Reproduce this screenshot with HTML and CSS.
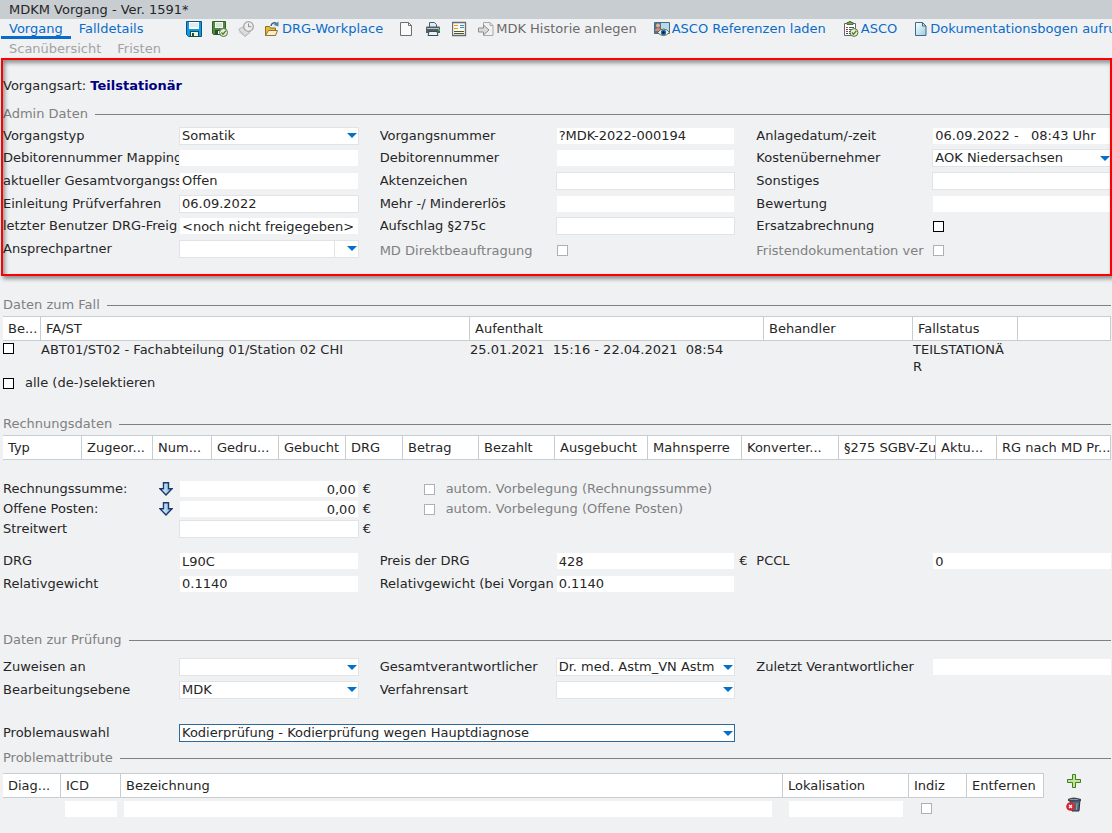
FILE: index.html
```html
<!DOCTYPE html>
<html lang="de">
<head>
    <meta charset="UTF-8">
    <meta name="viewport" content="width=device-width, initial-scale=1.0">
    <title>MDKM Vorgang</title>
    <link rel="stylesheet" href="styles.css">
</head>
<body>
    <h1 class="titlebar">MDKM Vorgang - Ver. 1591*</h1>

    <header class="header">
        <nav class="tabs">
            <div class="tab-row">
                <a href="#vorgang" class="tab active">Vorgang</a>
                <a href="#falldetails" class="tab">Falldetails</a>
            </div>
            <div class="tab-row">
                <a href="#scan" class="tab disabled">Scanübersicht</a>
                <a href="#fristen" class="tab disabled">Fristen</a>
            </div>
        </nav>
        <div class="toolbar">
            <button class="tool" aria-label="Speichern">
                <svg width="16" height="16" viewBox="0 0 16 16"><path d="M.5.5h15v15H2.5l-2-2z" fill="#0b9be8" stroke="#174f78"/><path d="M3 1h10v7H3z" fill="#fff"/><path d="M4 3h8M4 5h8" stroke="#c9d3d8"/><path d="M4 10h9v6H4z" fill="#174f43"/><path d="M5 11h7v4H5z" fill="#eef2e4"/><path d="M6 12h2v3H6z" fill="#174f43"/></svg>
            </button>
            <button class="tool" aria-label="Speichern und prüfen">
                <svg width="16" height="16" viewBox="0 0 16 16"><path d="M.5.5h13v13h-12l-1-1z" fill="#4d8a3d" stroke="#2e6327"/><path d="M3 1h8v6H3z" fill="#f4f6f2"/><path d="M4 3h6M4 5h6" stroke="#c3cbc0"/><path d="M3 9h7v5H3z" fill="#2c4f2c"/><path d="M6 10h3v3H6z" fill="#fff"/><circle cx="11.5" cy="11.5" r="4" fill="#e6edda" stroke="#58733c"/><path d="M9.5 11.5l1.5 1.7 2.8-3.4" fill="none" stroke="#4d7c2e" stroke-width="1.3"/></svg>
            </button>
            <button class="tool" aria-label="Wiedervorlage" disabled>
                <svg width="16" height="16" viewBox="0 0 16 16"><path d="M.5 8.500l5-3 7 5-5 4.500z" fill="#ddd" stroke="#b5b5b5"/><path d="M1 10.500l6 5 5-4" fill="none" stroke="#bbb"/><circle cx="10.500" cy="5.500" r="4.800" fill="#eee" stroke="#a5a5a5" stroke-width="1.300"/><path d="M10.500 2.500v3.200h2.800" fill="none" stroke="#8e8e8e"/></svg>
            </button>
            <button class="tool with-text">
                <svg width="16" height="16" viewBox="0 0 16 16"><path d="M1.500 5.500h4l1 1.500h5v7.500h-10z" fill="#e8b93a" stroke="#8e6f1e"/><path d="M4.500 9.500h9l-2 5h-10z" fill="#fdf0c0" stroke="#8a7440"/><path d="M7 5c.5-3 3-4 5.500-2.500" fill="none" stroke="#355f80" stroke-width="1.500"/><path d="M14.500.5v5L9.500 4z" fill="#4c87ac"/></svg>
                DRG-Workplace
            </button>
            <button class="tool" aria-label="Neu">
                <svg width="16" height="16" viewBox="0 0 16 16"><path d="M.5 1.500h8l3 3v10H.5z" fill="#fafafa" stroke="#6f6f6f"/><path d="M8.500 1.500v3h3" fill="none" stroke="#6f6f6f"/></svg>
            </button>
            <button class="tool" aria-label="Drucken">
                <svg width="16" height="16" viewBox="0 0 16 16"><path d="M3.500 6V1.500h5l2 2V6" fill="#d8edf7" stroke="#46606f"/><path d="M1 5.500h12q1 0 1 1V12H0V6.500q0-1 1-1z" fill="#555e64"/><path d="M1 7.500h12" stroke="#b9c2c6"/><path d="M12 8h2v2h-2z" fill="#25bb45"/><path d="M3 10.500h8l1 4H2z" fill="#e7f3f9" stroke="#3c4c55"/></svg>
            </button>
            <button class="tool" aria-label="Formular">
                <svg width="16" height="16" viewBox="0 0 16 16"><path d="M.5 1.500h13v13H.5z" fill="#f7f7f5" stroke="#6b6b6b" stroke-width="1.300"/><path d="M2 4.500h4M2 7.500h4" stroke="#eb9b10"/><path d="M8 4.500h4M8 6.500h4" stroke="#3d8db7"/><path d="M2 10.500h10M2 12.500h10" stroke="#4c5b26"/></svg>
            </button>
            <button class="tool with-text grey">
                <svg width="16" height="16" viewBox="0 0 16 16"><path d="M5.500 1.500h6.500l3 3v10H5.500z" fill="#f1f1f1" stroke="#a9a9a9"/><path d="M12 1.500v3h3" fill="none" stroke="#a9a9a9"/><path d="M.5 7h5V4l5.500 5-5.500 5v-3h-5z" fill="#d9d9d9" stroke="#8c8c8c"/></svg>
                MDK Historie anlegen
            </button>
            <button class="tool with-text">
                <svg width="16" height="16" viewBox="0 0 16 16"><path d="M.5 1.500h15v11H.5z" fill="#b7d9ea" stroke="#496b83"/><path d="M1 2h6v10H1z" fill="#54718c"/><circle cx="4" cy="4.500" r="2" fill="#e8b08b"/><path d="M1 10c0-4 6-4 6 0z" fill="#d98a72"/><path d="M3.500 11.500q6-7 12 0-6 6-12 0z" fill="#fff" stroke="#5d6b2b"/><circle cx="9.500" cy="11.500" r="2.700" fill="#2469bd"/><circle cx="9.500" cy="11.500" r="1.200" fill="#06173e"/></svg>
                ASCO Referenzen laden
            </button>
            <button class="tool with-text">
                <svg width="16" height="16" viewBox="0 0 16 16"><path d="M1.500 2.500h11v12h-11z" fill="#fff" stroke="#666"/><path d="M4 3.500V1.500h2v-1h2v1h2v2z" fill="#7ba05b" stroke="#4e7137"/><path d="M3 6.500h2M3 10.500h2" stroke="#c8322b"/><path d="M3 8.500h2M3 12.500h2" stroke="#27509b"/><path d="M6 6.500h5M6 8.500h5M6 10.500h2M6 12.500h2" stroke="#555"/><circle cx="11" cy="11.500" r="3.900" fill="#e6edda" stroke="#58733c"/><path d="M9 11.500l1.500 1.700 2.800-3.400" fill="none" stroke="#4d7c2e" stroke-width="1.300"/></svg>
                ASCO
            </button>
            <button class="tool with-text">
                <svg width="14" height="16" viewBox="0 0 14 16"><defs><linearGradient id="sheet" x2="1" y2="1"><stop offset="0" stop-color="#fff"/><stop offset="1" stop-color="#98cbe4"/></linearGradient></defs><path d="M1.500 1.500h7l3.500 3.500v9.500H1.500z" fill="url(#sheet)" stroke="#3d6a85"/><path d="M8.500 1.500v3.500H12" fill="none" stroke="#3d6a85"/></svg>
                Dokumentationsbogen aufrufen
            </button>
        </div>
    </header>

    <main>
        <section class="admin">
            <p class="case-type">Vorgangsart: <strong>Teilstationär</strong></p>
            <h2 class="section-title">Admin Daten</h2>
            <div class="form admin-form">
                <div class="pair"><label for="typ">Vorgangstyp</label><select id="typ"><option>Somatik</option></select></div>
                <div class="pair"><label for="nummer">Vorgangsnummer</label><input type="text" id="nummer" value="?MDK-2022-000194" readonly></div>
                <div class="pair"><label for="anlage">Anlagedatum/-zeit</label><input type="text" id="anlage" value="06.09.2022 -   08:43 Uhr" readonly></div>

                <div class="pair"><label for="debMap">Debitorennummer Mapping</label><input type="text" id="debMap" readonly></div>
                <div class="pair"><label for="deb">Debitorennummer</label><input type="text" id="deb" readonly></div>
                <div class="pair"><label for="kosten">Kostenübernehmer</label><select id="kosten"><option>AOK Niedersachsen</option></select></div>

                <div class="pair"><label for="status">aktueller Gesamtvorgangss</label><input type="text" id="status" value="Offen" readonly></div>
                <div class="pair"><label for="akte">Aktenzeichen</label><input type="text" id="akte"></div>
                <div class="pair"><label for="sonst">Sonstiges</label><input type="text" id="sonst"></div>

                <div class="pair"><label for="einleitung">Einleitung Prüfverfahren</label><input type="text" id="einleitung" value="06.09.2022"></div>
                <div class="pair"><label for="erloes">Mehr -/ Mindererlös</label><input type="text" id="erloes" readonly></div>
                <div class="pair"><label for="bewertung">Bewertung</label><input type="text" id="bewertung" readonly></div>

                <div class="pair"><label for="benutzer">letzter Benutzer DRG-Freig</label><input type="text" id="benutzer" value="&lt;noch nicht freigegeben&gt;" readonly></div>
                <div class="pair"><label for="aufschlag">Aufschlag §275c</label><input type="text" id="aufschlag"></div>
                <div class="pair"><label for="ersatz">Ersatzabrechnung</label><input type="checkbox" id="ersatz"></div>

                <div class="pair"><label for="partner">Ansprechpartner</label><select id="partner" class="split"><option></option></select></div>
                <div class="pair low"><label for="direkt">MD Direktbeauftragung</label><input type="checkbox" id="direkt" disabled></div>
                <div class="pair low"><label for="fristdok">Fristendokumentation ver</label><input type="checkbox" id="fristdok" disabled></div>
            </div>
        </section>

        <section class="case">
            <h2 class="section-title">Daten zum Fall</h2>
            <table>
                <colgroup><col class="w38"><col><col class="w294"><col class="w149"><col class="w105"><col class="w93"></colgroup>
                <thead>
                    <tr><th>Be...</th><th>FA/ST</th><th>Aufenthalt</th><th>Behandler</th><th>Fallstatus</th><th></th></tr>
                </thead>
                <tbody>
                    <tr>
                        <td><input type="checkbox" aria-label="Fall auswählen"></td>
                        <td>ABT01/ST02 - Fachabteilung 01/Station 02 CHI</td>
                        <td class="keep">25.01.2021  15:16 - 22.04.2021  08:54</td>
                        <td></td>
                        <td>TEILSTATIONÄ<br>R</td>
                        <td></td>
                    </tr>
                </tbody>
            </table>
            <label class="select-all"><input type="checkbox">alle (de-)selektieren</label>
        </section>

        <section class="invoices">
            <h2 class="section-title">Rechnungsdaten</h2>
            <table>
                <colgroup><col class="w79"><col class="w71"><col class="w59"><col class="w67"><col class="w67"><col class="w57"><col class="w76"><col class="w76"><col class="w93"><col class="w94"><col class="w97"><col class="w97"><col class="w61"><col></colgroup>
                <thead>
                    <tr><th>Typ</th><th>Zugeor...</th><th>Num...</th><th>Gedru...</th><th>Gebucht</th><th>DRG</th><th>Betrag</th><th>Bezahlt</th><th>Ausgebucht</th><th>Mahnsperre</th><th>Konverter...</th><th>§275 SGBV-Zu</th><th>Aktu...</th><th>RG nach MD Pr...</th></tr>
                </thead>
            </table>

            <div class="form money-form">
                <div class="pair">
                    <div class="label-tool">
                        <label for="summe">Rechnungssumme:</label>
                        <button class="tool" aria-label="Rechnungssumme übernehmen"><svg width="14" height="14" viewBox="0 0 14 14"><defs><linearGradient id="down" x2="1"><stop offset="0" stop-color="#fff"/><stop offset="1" stop-color="#69afd8"/></linearGradient></defs><path d="M4.500.7h5v6h3.500L7 13 1 6.700h3.500z" fill="url(#down)" stroke="#1d3b70" stroke-width="1.400"/></svg></button>
                    </div>
                    <input type="text" id="summe" class="amount" value="0,00" readonly><span class="unit">€</span>
                </div>
                <label class="auto"><input type="checkbox" disabled>autom. Vorbelegung (Rechnungssumme)</label>
                <div class="pair">
                    <div class="label-tool">
                        <label for="offen">Offene Posten:</label>
                        <button class="tool" aria-label="Offene Posten übernehmen"><svg width="14" height="14" viewBox="0 0 14 14"><path d="M4.500.7h5v6h3.500L7 13 1 6.700h3.500z" fill="url(#down)" stroke="#1d3b70" stroke-width="1.400"/></svg></button>
                    </div>
                    <input type="text" id="offen" class="amount" value="0,00" readonly><span class="unit">€</span>
                </div>
                <label class="auto"><input type="checkbox" disabled>autom. Vorbelegung (Offene Posten)</label>
                <div class="pair"><label for="streit">Streitwert</label><input type="text" id="streit" class="amount"><span class="unit">€</span></div>
            </div>

            <div class="form drg-form">
                <div class="pair"><label for="drg">DRG</label><input type="text" id="drg" value="L90C" readonly></div>
                <div class="pair"><label for="preis">Preis der DRG</label><input type="text" id="preis" value="428" readonly><span class="unit">€</span></div>
                <div class="pair"><label for="pccl">PCCL</label><input type="text" id="pccl" value="0" readonly></div>
                <div class="pair"><label for="gewicht">Relativgewicht</label><input type="text" id="gewicht" value="0.1140" readonly></div>
                <div class="pair"><label for="gewichtV">Relativgewicht (bei Vorgan</label><input type="text" id="gewichtV" value="0.1140" readonly></div>
            </div>
        </section>

        <section class="review">
            <h2 class="section-title">Daten zur Prüfung</h2>
            <div class="form review-form">
                <div class="pair"><label for="zuweisen">Zuweisen an</label><select id="zuweisen"><option></option></select></div>
                <div class="pair"><label for="gesamt">Gesamtverantwortlicher</label><select id="gesamt"><option>Dr. med. Astm_VN Astm</option></select></div>
                <div class="pair"><label for="zuletzt">Zuletzt Verantwortlicher</label><input type="text" id="zuletzt" readonly></div>
                <div class="pair"><label for="ebene">Bearbeitungsebene</label><select id="ebene"><option>MDK</option></select></div>
                <div class="pair"><label for="verfahren">Verfahrensart</label><select id="verfahren"><option></option></select></div>
            </div>
            <div class="form problem-form">
                <div class="pair wide"><label for="problem">Problemauswahl</label><select id="problem" class="focused"><option>Kodierprüfung - Kodierprüfung wegen Hauptdiagnose</option></select></div>
            </div>
        </section>

        <section class="attributes">
            <h2 class="section-title">Problemattribute</h2>
            <div class="attribute-list">
                <table>
                    <colgroup><col class="w58"><col class="w60"><col><col class="w126"><col class="w58"><col class="w77"></colgroup>
                    <thead>
                        <tr><th>Diag...</th><th>ICD</th><th>Bezeichnung</th><th>Lokalisation</th><th>Indiz</th><th>Entfernen</th></tr>
                    </thead>
                    <tbody>
                        <tr>
                            <td></td>
                            <td><input type="text" aria-label="ICD" readonly></td>
                            <td class="description"><input type="text" aria-label="Bezeichnung" readonly></td>
                            <td class="location"><input type="text" aria-label="Lokalisation" readonly></td>
                            <td class="indicator"><input type="checkbox" aria-label="Indiz" disabled></td>
                            <td></td>
                        </tr>
                    </tbody>
                </table>
                <div class="list-actions">
                    <button class="tool" aria-label="Hinzufügen"><svg width="16" height="16" viewBox="0 0 16 16"><path d="M6.500 1.500h3v5h5v3h-5v5h-3v-5h-5v-3h5z" fill="#c5e39b" stroke="#3f7d1f"/></svg></button>
                    <button class="tool" aria-label="Löschen"><svg width="16" height="16" viewBox="0 0 16 16"><path d="M4 5l10-1-1 11H6z" fill="#53667c" stroke="#28323e"/><path d="M7 7v7M11 7l-.5 7" stroke="#93a5b8"/><path d="M2 3q5-3 13 0v2q-7 1-13 0z" fill="#3c4a59"/><path d="M4 3.500h8" stroke="#8496a8"/><circle cx="4.500" cy="10.500" r="4.300" fill="#d8232a"/><path d="M3 9l3 3M6 9l-3 3" stroke="#fff" stroke-width="1.300"/></svg></button>
                </div>
            </div>
        </section>
    </main>
</body>
</html>
```

FILE: styles.css
```css
* {
    box-sizing: border-box;
}

body {
    margin: 0;
    overflow-x: hidden;
    background-color: #f0f1f3;
    color: #262626;
    font-family: Verdana, "DejaVu Sans", sans-serif;
    font-size: 13px;
    line-height: 20px;
}

button, input, select {
    font: inherit;
    color: inherit;
}

.titlebar {
    margin: 0;
    padding-left: 9px;
    background-color: #c8cdd1;
    font-size: 13px;
    font-weight: normal;
    line-height: 19px;
}

/* tabs and toolbar */
.header {
    display: flex;
    align-items: flex-start;
    height: 39px;
    overflow: hidden;
}

.tabs {
    flex: 0 0 186px;
    padding-left: 1px;
}

.tab-row {
    display: flex;
}

.tab {
    padding: 0 8px;
    color: #0a6cc8;
    text-decoration: none;
}

.tab.active {
    box-shadow: inset 0 -3px #0a6cc8;
}

.tab.disabled {
    color: #a3a3a3;
}

.toolbar {
    display: flex;
    flex: 1;
    gap: 10px;
    min-width: 0;
}

.tool {
    display: flex;
    flex: none;
    align-items: center;
    gap: 2px;
    padding: 0;
    border: none;
    background: none;
    color: #0a6cc8;
    white-space: nowrap;
    cursor: pointer;
}

.tool.with-text {
    margin-right: 7px;
}

.tool.grey {
    color: #6b6b6b;
}

/* sections */
main {
    padding-left: 3px;
}

.section-title {
    display: flex;
    align-items: center;
    gap: 7px;
    margin: 0 1px 1px 0;
    color: #808080;
    font-size: 13px;
    font-weight: normal;
}

.section-title::after {
    content: "";
    flex: 1;
    height: 1px;
    background-color: #808080;
}

.admin {
    position: relative;
    padding: 18px 0 16px;
}

.admin::after {
    content: "";
    position: absolute;
    inset: 0 0 0 -2px;
    border: 2px solid #f00;
    box-shadow: 2px 3px 4px rgba(0, 0, 0, 0.4), inset 2px 3px 4px rgba(0, 0, 0, 0.4);
    pointer-events: none;
}

.admin .section-title {
    margin-bottom: 0;
}

.case-type {
    margin: 0 0 8px;
}

.case-type strong {
    color: #000080;
}

.case {
    padding-top: 19px;
}

.invoices {
    padding-top: 23px;
}

.review {
    padding-top: 35px;
}

.attributes {
    padding-top: 4px;
}

/* forms */
.form {
    display: grid;
    grid-template-columns: repeat(3, 1fr);
    margin-right: -21px;
}

.admin-form {
    grid-template-rows: 23px 22px 23px 23px 22px 23px;
}

.money-form {
    grid-template-rows: 20px 20px 20px;
    margin-top: 19px;
}

.money-form .pair {
    grid-column: 1;
}

.drg-form {
    grid-template-rows: 22px 23px;
    margin-top: 11px;
}

.review-form {
    grid-template-rows: 22px 23px;
    margin-top: 6px;
}

.problem-form {
    grid-template-rows: 22px;
    margin-top: 21px;
}

.pair {
    display: grid;
    grid-template-columns: 176px 1fr 21px;
    align-items: center;
    min-width: 0;
}

.pair.wide {
    grid-column: span 2;
}

.pair.low {
    padding-top: 4px;
    color: #808080;
}

.pair label {
    overflow: hidden;
    white-space: nowrap;
}

.label-tool {
    display: flex;
    align-items: center;
    justify-content: space-between;
    padding-right: 6px;
}

.unit {
    padding-left: 4px;
}

.auto {
    display: flex;
    grid-column: 2 / span 2;
    align-items: center;
    gap: 11px;
    padding-left: 44px;
    color: #808080;
}

input[type="text"], select {
    width: 100%;
    min-width: 0;
    height: 18px;
    padding: 0 2px;
    border: 1px solid #e1e4e7;
    border-radius: 0;
    outline: none;
    background-color: #fff;
    line-height: 16px;
}

input[type="text"]:read-only {
    border-color: transparent;
    background-clip: padding-box;
}

input.amount {
    text-align: right;
}

select {
    appearance: none;
    background-image: url("data:image/svg+xml,%3Csvg xmlns='http://www.w3.org/2000/svg' width='10' height='5'%3E%3Cpath d='M0 0h10L5 5z' fill='%230070cc'/%3E%3C/svg%3E");
    background-repeat: no-repeat;
    background-position: right 1px center;
}

select.split {
    background-image: url("data:image/svg+xml,%3Csvg xmlns='http://www.w3.org/2000/svg' width='24' height='16'%3E%3Cpath d='M0 0h1v16H0z' fill='%23e1e4e7'/%3E%3Cpath d='M13 5h10l-5 5z' fill='%230070cc'/%3E%3C/svg%3E");
    background-position: right center;
}

select.focused {
    border-color: #2c6b9c;
}

input[type="checkbox"] {
    appearance: none;
    flex: none;
    width: 11px;
    height: 11px;
    margin: 0;
    border: 1px solid #000;
    background-color: #fff;
}

input[type="checkbox"]:disabled {
    border-color: #adb1b5;
}

.pair input[type="checkbox"] {
    margin-left: 1px;
}

/* tables */
table {
    width: calc(100% - 1px);
    border-spacing: 0;
    table-layout: fixed;
}

th {
    height: 25px;
    padding: 0 0 0 5px;
    overflow: hidden;
    border: 1px solid #c8cdd1;
    border-left: none;
    background-color: #fff;
    font-weight: normal;
    text-align: left;
    white-space: nowrap;
}

td {
    padding: 0;
    line-height: 17px;
    vertical-align: top;
}

td.keep {
    white-space: pre;
}

.case td input {
    display: block;
    margin-top: 2px;
}

.select-all {
    display: flex;
    align-items: center;
    gap: 11px;
    line-height: 16px;
}

.attribute-list {
    display: flex;
    gap: 22px;
    margin-top: 5px;
    padding-right: 30px;
}

.attribute-list table {
    flex: 1;
    width: auto;
    min-width: 0;
}

.attribute-list td {
    height: 21px;
    padding: 0 3px;
    vertical-align: middle;
}

.attribute-list td input {
    display: block;
}

.attribute-list td.description {
    padding: 0 10px 0 2px;
}

.attribute-list td.location {
    padding: 0 5px;
}

.attribute-list td.indicator {
    padding-left: 12px;
}

.list-actions {
    display: flex;
    flex-direction: column;
    gap: 7px;
}

.w38 { width: 38px; }
.w57 { width: 57px; }
.w58 { width: 58px; }
.w59 { width: 59px; }
.w60 { width: 60px; }
.w61 { width: 61px; }
.w67 { width: 67px; }
.w71 { width: 71px; }
.w76 { width: 76px; }
.w77 { width: 77px; }
.w79 { width: 79px; }
.w93 { width: 93px; }
.w94 { width: 94px; }
.w97 { width: 97px; }
.w105 { width: 105px; }
.w126 { width: 126px; }
.w149 { width: 149px; }
.w294 { width: 294px; }
```
